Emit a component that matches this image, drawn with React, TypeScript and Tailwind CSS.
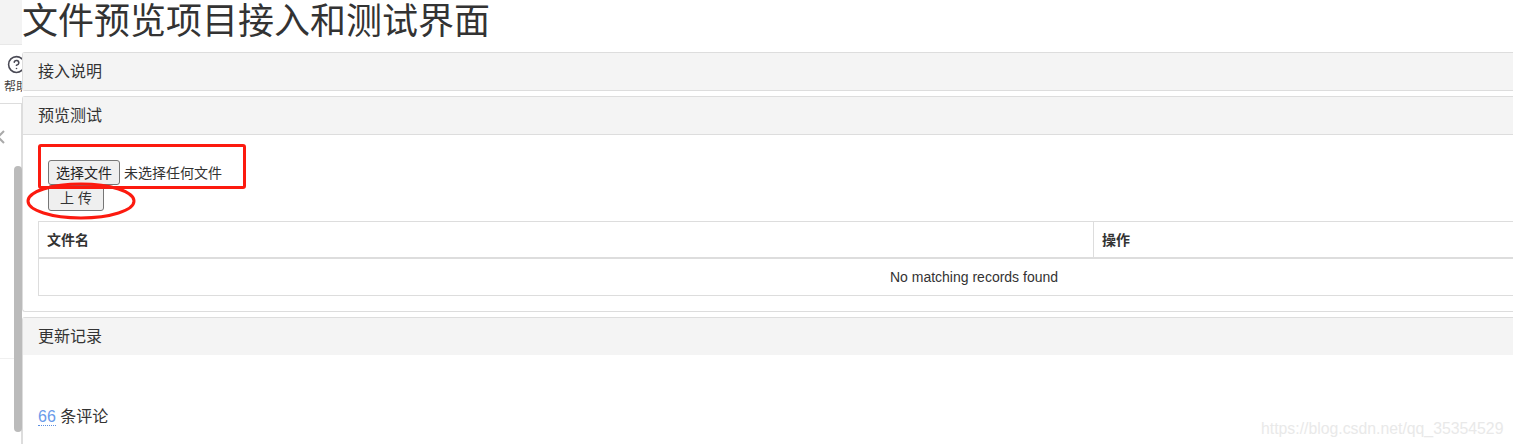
import React from "react";
import { CircleHelp } from "lucide-react";

const cjk = "font-['Liberation_Sans','Noto_Sans_CJK_SC',sans-serif]";

const Panel = ({ title, children, className }: { title: string; children?: React.ReactNode; className?: string }) => (
  <div className={`rounded-l-[3px] border border-r-0 border-[#ddd] ${className ?? ""}`}>
    <div className="flex h-[37px] items-center bg-[#f4f4f4] px-[15px] pt-[1px] text-[16px] text-[#333]">{title}</div>
    {children}
  </div>
);

const Sidebar = () => (
  <div className="flex h-full w-[22px] shrink-0 flex-col overflow-hidden">
    <div className="h-[45px] shrink-0 border-b border-[#e8e8e8] bg-[#f3f3f3]" />
    <div className="flex h-[58px] w-[40px] shrink-0 flex-col items-start pl-[4px] pt-[10px]">
      <CircleHelp className="ml-[3px] h-[19px] w-[19px] text-[#4a4a55]" strokeWidth={2} />
      <span className="mt-[5px] whitespace-nowrap text-[12px] leading-[16px] text-[#444]">帮助</span>
    </div>
    <div className="h-[63px] shrink-0 border-t border-r border-[#ddd]">
      <svg width="8" height="16" viewBox="0 0 8 16" className="mt-[26px]" fill="none" stroke="#aaa" strokeWidth="2">
        <path d="M4 1 L-2 7 L4 13" />
      </svg>
    </div>
    <div className="flex flex-1 flex-col border-r border-[#ddd]">
      <div className="ml-[14px] h-[266px] w-[8px] shrink-0 rounded-[4px] bg-[#bbb]" />
    </div>
    <div className="absolute left-0 top-[358px] h-px w-[14px] bg-[#f0f0f0]" />
  </div>
);

export default function App() {
  return (
    <div className={`relative flex h-[444px] w-[1513px] overflow-hidden bg-white ${cjk}`}>
      <Sidebar />
      <div className="w-[1900px] shrink-0">
        <h1 className="h-[52px] text-[36px] leading-[44px] text-[#333]">文件预览项目接入和测试界面</h1>
        <Panel title="接入说明" className="h-[39px]" />
        <Panel title="预览测试" className="mt-[5px] h-[216px]">
          <div className="border-t border-[#ddd] px-[15px] pt-[25px]">
            <div className="flex items-center pl-[10px]">
              <button className="h-[25px] w-[72px] rounded-[3px] border border-[#767676] bg-[#efefef] pt-[1px] text-[14px] text-[#222]">选择文件</button>
              <span className="ml-[4px] pt-[1px] text-[14px] text-[#333]">未选择任何文件</span>
            </div>
            <button className="ml-[10px] block h-[26px] w-[56px] rounded-[3px] border border-[#767676] bg-[#efefef] text-[14px] text-[#333]">上 传</button>
            <table className="mt-[10px] w-[1870px] table-fixed border-collapse border border-[#ddd] text-[14px] text-[#333]">
              <thead>
                <tr className="h-[36px] border-b-2 border-[#ddd] text-left font-bold">
                  <th className="w-[1055px] border-r border-[#ddd] px-[8px] pt-[2px]">文件名</th>
                  <th className="px-[8px] pt-[2px]">操作</th>
                </tr>
              </thead>
              <tbody>
                <tr className="h-[38px]">
                  <td colSpan={2} className="pl-[2px] pt-[2px] text-center">No matching records found</td>
                </tr>
              </tbody>
            </table>
          </div>
        </Panel>
        <div className="mt-[5px] h-[200px] rounded-tl-[3px] border-l border-t border-[#ddd]">
          <div className="flex h-[37px] items-center bg-[#f4f4f4] px-[15px] pt-[1px] text-[16px] text-[#333]">更新记录</div>
          <div className="mt-[50px] px-[15px] text-[16px] leading-[24px] text-[#333]">
            <span className="border-b border-dotted border-[#5c8fe0] text-[#6a9bea]">66</span> 条评论
          </div>
        </div>
      </div>

      <div className="absolute left-[38px] top-[144px] h-[45px] w-[208px] rounded-[3px] border-[3px] border-[#fc1a0f]" />
      <svg className="absolute left-[26px] top-[182px]" width="110" height="40" viewBox="0 0 110 40" fill="none">
        <ellipse cx="55" cy="19" rx="53" ry="17" stroke="#fc1a0f" strokeWidth="3" />
      </svg>
      <span className="absolute left-[1261px] top-[417px] font-['Liberation_Sans',sans-serif] text-[15.8px] text-[#e9e9e9]">https://blog.csdn.net/qq_35354529</span>
    </div>
  );
}
